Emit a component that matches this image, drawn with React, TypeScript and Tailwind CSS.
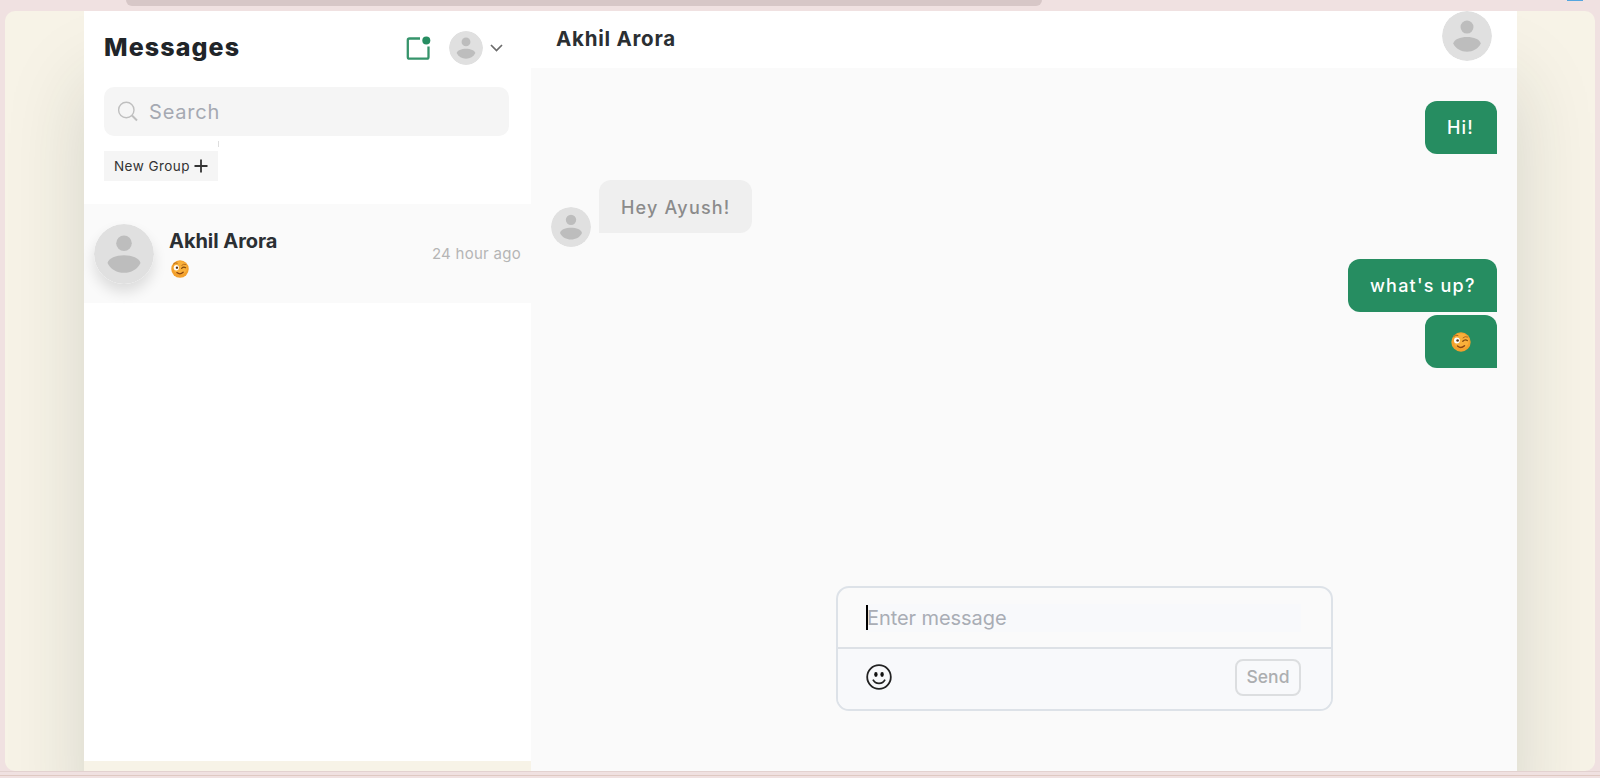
import React from "react";

function Avatar({ size, className = "" }: { size: number; className?: string }) {
  return (
    <svg width={size} height={size} viewBox="0 0 60 60" className={`shrink-0 rounded-full ${className}`}>
      <circle cx="30" cy="30" r="30" fill="#e0e0e0" />
      <circle cx="30" cy="19.300" r="7.800" fill="#bdbdbd" />
      <path d="M13.500 39C14.500 34 22 31.200 30 31.200S45.500 34 46.500 39C43.500 45.500 37 48.800 30 48.800S16.500 45.500 13.500 39z" fill="#bdbdbd" />
    </svg>
  );
}

function Wink({ size }: { size: number }) {
  return (
    <svg width={size} height={size} viewBox="0 0 20 20" className="block shrink-0" role="img" aria-label="😉">
      <circle cx="10" cy="10" r="9.700" fill="#f3a02c" />
      <circle cx="10.300" cy="9" r="7.500" fill="#f9b03a" />
      <ellipse cx="5.900" cy="8.600" rx="2.900" ry="3" fill="#fff" />
      <circle cx="6.600" cy="8.500" r="1.300" fill="#5b3414" />
      <path d="M2.800 4.300Q4.500 2.300 7 3.500M12 5.800q2-2 4.500-.8" fill="none" stroke="#b0661c" strokeWidth="1" strokeLinecap="round" />
      <path d="M11.800 9.300q2.200-2.400 4.500-.7" fill="none" stroke="#80490f" strokeWidth="1.300" strokeLinecap="round" />
      <path d="M6.500 14q3.500 3 7-.3" fill="none" stroke="#8c4510" strokeWidth="1.500" strokeLinecap="round" />
    </svg>
  );
}

const outgoing = "flex h-[53px] items-center rounded-t-[12px] rounded-bl-[12px] bg-[#268d61] text-[18px] font-medium tracking-[1.2px] text-white";

function Sidebar() {
  return (
    <aside className="h-[750px] w-[447px] shrink-0 bg-white">
      <div className="flex h-[76px] items-center pl-5">
        <h1 className="w-[302px] pb-[3px] text-[25px] font-extrabold tracking-[1.1px] text-[#212529]">Messages</h1>
        <svg width="25" height="25" viewBox="0 0 24 25" fill="none" className="mb-[2px] shrink-0">
          <path d="M13.500 2.500H3a1.700 1.700 0 0 0-1.700 1.700V21A1.700 1.700 0 0 0 3 22.700h17.300A1.700 1.700 0 0 0 22 21V10.500" stroke="#36946b" strokeWidth="2.300" />
          <circle cx="19.800" cy="4.400" r="4" fill="#268d61" />
        </svg>
        <Avatar size={34} className="mb-[3px] ml-[18px]" />
        <svg width="13" height="8" viewBox="0 0 13 8" fill="none" className="mb-[2px] ml-[7px] shrink-0">
          <path d="M1 1l5.500 5.500L12 1" stroke="#6b6b6b" strokeWidth="1.700" />
        </svg>
      </div>
      <div className="ml-5 flex h-[49px] w-[405px] items-center rounded-[10px] bg-[#f5f5f5] pl-[13px]">
        <svg width="22" height="22" viewBox="0 0 22 22" fill="none" stroke="#bfbfbf" className="shrink-0">
          <circle cx="9.300" cy="9" r="7.700" strokeWidth="1.400" />
          <path d="M15 14.500l5 5" strokeWidth="2" />
        </svg>
        <span className="ml-[10px] text-[20px] tracking-[0.8px] text-[#a5a9b2]">Search</span>
      </div>
      <div className="ml-[134px] mt-[5px] h-[6px] w-px bg-[#dedede]" />
      <button className="ml-5 mt-[4px] flex h-[30px] w-[114px] items-center bg-[#f5f5f5] pl-[10px] text-[13.500px] tracking-[0.45px] text-[#333]">
        New Group
        <svg width="14" height="14" viewBox="0 0 14 14" stroke="#333" strokeWidth="1.800" className="ml-[4px] shrink-0">
          <path d="M7 .5v13M.5 7h13" />
        </svg>
      </button>
      <div className="mt-[23px] flex h-[99px] items-center bg-[#fafafa] pl-[10px] pr-[10px]">
        <Avatar size={60} className="shadow-[0_8px_14px_rgba(0,0,0,0.12)]" />
        <div className="ml-[15px] flex-1">
          <div className="text-[20px] font-bold leading-6 tracking-[-0.05px] text-[#2b2f33]">Akhil Arora</div>
          <div className="mt-[7px] pl-[2px]"><Wink size={18} /></div>
        </div>
        <span className="pt-px text-[15px] tracking-[0.280px] text-[#b5b5b5]">24 hour ago</span>
      </div>
    </aside>
  );
}

function Composer() {
  return (
    <div className="ml-[305px] h-[125px] w-[497px] overflow-hidden rounded-[13px] border-2 border-[#dde2e8]">
      <div className="flex h-[61px] items-center border-b-2 border-[#dde1e6] pl-[28px]">
        <div className="flex h-[28px] w-[435px] items-center bg-[#f8f9fb]">
          <span className="h-[25px] w-[2px] bg-black" />
          <span className="-ml-[1px] text-[20px] tracking-[-0.07px] text-[#a9adb5]">Enter message</span>
        </div>
      </div>
      <div className="flex h-[60px] items-center justify-between bg-[#f8f9fb] pb-[3px] pl-[28px] pr-[30px]">
        <svg width="26" height="26" viewBox="0 0 26 26" fill="none" stroke="#222" strokeWidth="1.800" className="mb-[2px]">
          <circle cx="13" cy="13" r="11.800" />
          <path d="M7 15.700c2.500 5 9.500 5 12 0" />
          <ellipse cx="9.900" cy="10.500" rx="1.700" ry="2.400" fill="#111" stroke="none" />
          <ellipse cx="16.100" cy="10.500" rx="1.700" ry="2.400" fill="#111" stroke="none" />
        </svg>
        <button className="flex h-[37px] w-[66px] items-center justify-center rounded-[8px] border-2 border-[#dcdee0] text-[17.500px] font-medium text-[#acaeb0]">Send</button>
      </div>
    </div>
  );
}

function Chat() {
  return (
    <main className="flex h-full flex-1 flex-col bg-[#fafafa]">
      <header className="flex h-[57px] shrink-0 items-center justify-between bg-white pl-[25px] pr-[25px]">
        <h2 className="text-[20.500px] font-bold tracking-[0.750px] text-[#2b2f33]">Akhil Arora</h2>
        <Avatar size={50} className="mb-[7px]" />
      </header>
      <div className="flex h-[518px] shrink-0 flex-col pl-5 pr-5 pt-[33px]">
        <div className={`${outgoing} w-[72px] self-end pl-[22px]`}>Hi!</div>
        <div className="mt-[26px] flex h-[67px] items-start">
          <Avatar size={40} className="self-end" />
          <div className="ml-[8px] flex h-[53px] w-[153px] items-center rounded-t-[12px] rounded-br-[12px] bg-[#efefef] pl-[22px] pt-px text-[18px] font-medium tracking-[1.2px] text-[#8b8b8b]">Hey Ayush!</div>
        </div>
        <div className={`${outgoing} mt-[12px] w-[149px] self-end pl-[22px]`}>what's up?</div>
        <div className={`${outgoing} mt-[3px] w-[72px] justify-center self-end`}><Wink size={20} /></div>
      </div>
      <Composer />
    </main>
  );
}

export default function App() {
  return (
    <div className="flex h-[778px] w-[1600px] flex-col overflow-hidden bg-[#f0e1e1] font-['Inter',sans-serif] leading-normal">
      <div className="flex h-[11px] shrink-0 items-start justify-between pl-[126px] pr-[17px]">
        <div className="h-[6px] w-[916px] rounded-b-[14px] bg-[#d7c7c7]" />
        <div className="h-[1px] w-[16px] bg-[#55a6df]" />
      </div>
      <div className="mx-[5px] flex h-[760px] shrink-0 justify-center overflow-hidden rounded-[10px] bg-[#f7f3e7] pl-px">
        <div className="flex h-full w-[1433px] shadow-[0_70px_75px_rgba(30,50,40,0.15)]">
          <Sidebar />
          <Chat />
        </div>
      </div>
      <div className="h-[4px] shrink-0 border-t border-[#e3d2d0]" />
      <div className="h-px shrink-0 bg-[#dfc9c2]" />
    </div>
  );
}
